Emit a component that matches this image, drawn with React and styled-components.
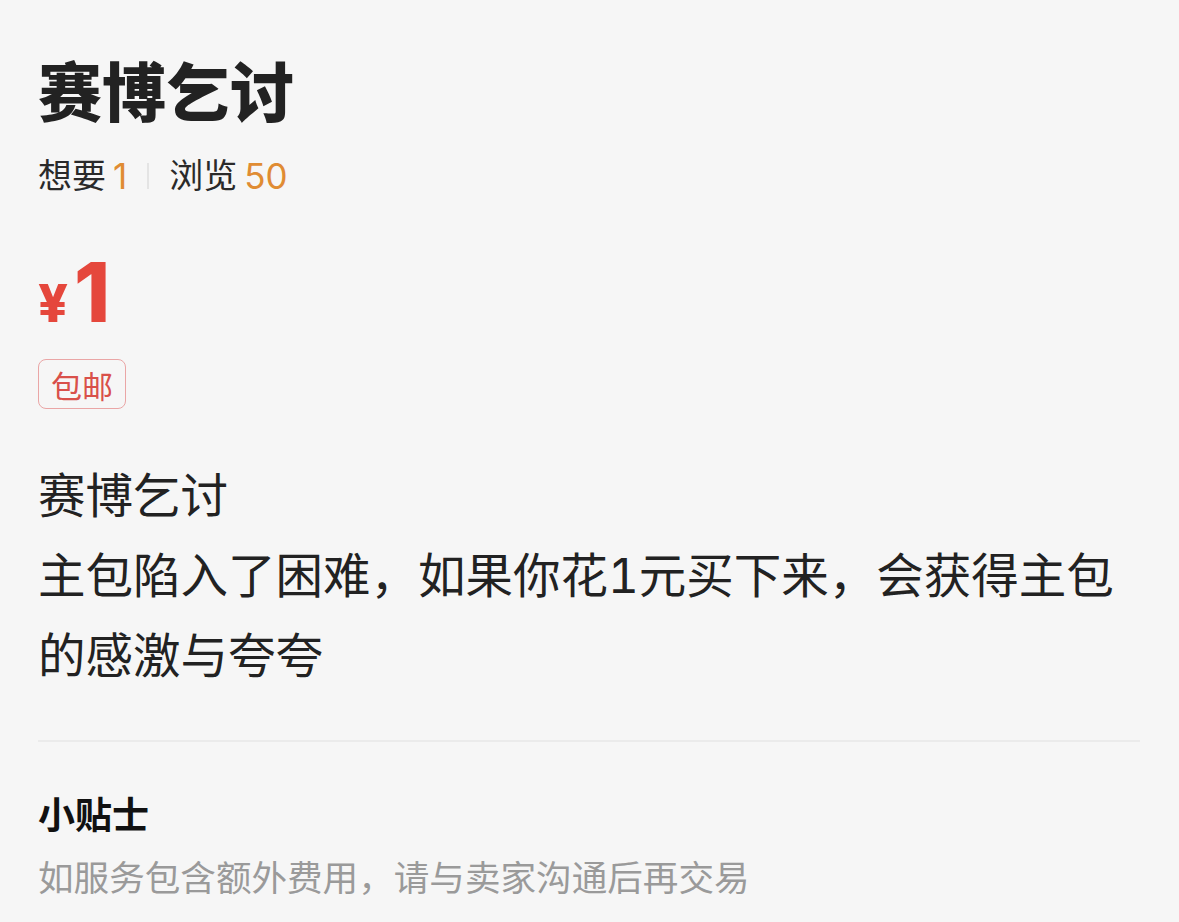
import React from "react";
import styled, { createGlobalStyle } from "styled-components";

const GlobalStyle = createGlobalStyle`
  html, body {
    margin: 0;
    padding: 0;
    background: #f6f6f6;
  }
  body {
    font-family: Inter, "Noto Sans CJK SC", sans-serif;
    -webkit-font-smoothing: antialiased;
  }
`;

const Page = styled.main`
  box-sizing: border-box;
  width: 1179px;
  min-height: 922px;
  padding: 53px 39px 0 38px;
  background: #f6f6f6;
  display: flex;
  flex-direction: column;
  align-items: flex-start;
`;

const Title = styled.h1`
  margin: 0;
  font-size: 64px;
  line-height: 80px;
  font-weight: 800;
  color: #222;
`;

const Stats = styled.div`
  margin-top: 21px;
  display: flex;
  align-items: center;
  font-size: 34px;
  line-height: 44px;
  color: #2a2a2a;
`;

const StatNum = styled.span`
  margin-left: 7px;
  font-size: 35px;
  color: #e08c33;
`;

const Sep = styled.span`
  width: 2px;
  height: 26px;
  margin: 0 20px;
  background: #e4e4e4;
`;

const Price = styled.div`
  margin-top: 54px;
  display: flex;
  align-items: baseline;
  color: #e5473c;
  font-weight: 800;
  line-height: 1;
`;

const Currency = styled.span`
  font-size: 52px;
  margin-right: 6px;
`;

const Amount = styled.span`
  font-size: 82px;
`;

const Tag = styled.span`
  box-sizing: border-box;
  margin-top: 25px;
  height: 50px;
  padding: 0 12px;
  display: inline-flex;
  align-items: center;
  border: 1px solid #eaa6a6;
  border-radius: 8px;
  font-size: 31px;
  color: #d9504a;
`;

const Desc = styled.p`
  margin: 47px 0 0;
  width: 100%;
  font-size: 47.5px;
  line-height: 80px;
  font-feature-settings: "tnum" 1;
  color: #222;
`;

const Divider = styled.hr`
  width: 100%;
  margin: 44px 0 0;
  border: none;
  height: 2px;
  background: #ebebeb;
`;

const TipTitle = styled.h2`
  margin: 49px 0 0;
  font-size: 37px;
  line-height: 50px;
  font-weight: 700;
  color: #111;
`;

const TipText = styled.p`
  margin: 13px 0 0;
  font-size: 35.6px;
  line-height: 50px;
  color: #9a9a9a;
`;

export default function App() {
  return (
    <>
      <GlobalStyle />
      <Page>
        <Title>赛博乞讨</Title>
        <Stats>
          想要<StatNum>1</StatNum>
          <Sep />
          浏览<StatNum>50</StatNum>
        </Stats>
        <Price>
          <Currency>¥</Currency>
          <Amount>1</Amount>
        </Price>
        <Tag>包邮</Tag>
        <Desc>
          赛博乞讨
          <br />
          主包陷入了困难，如果你花1元买下来，会获得主包的感激与夸夸
        </Desc>
        <Divider />
        <TipTitle>小贴士</TipTitle>
        <TipText>如服务包含额外费用，请与卖家沟通后再交易</TipText>
      </Page>
    </>
  );
}
